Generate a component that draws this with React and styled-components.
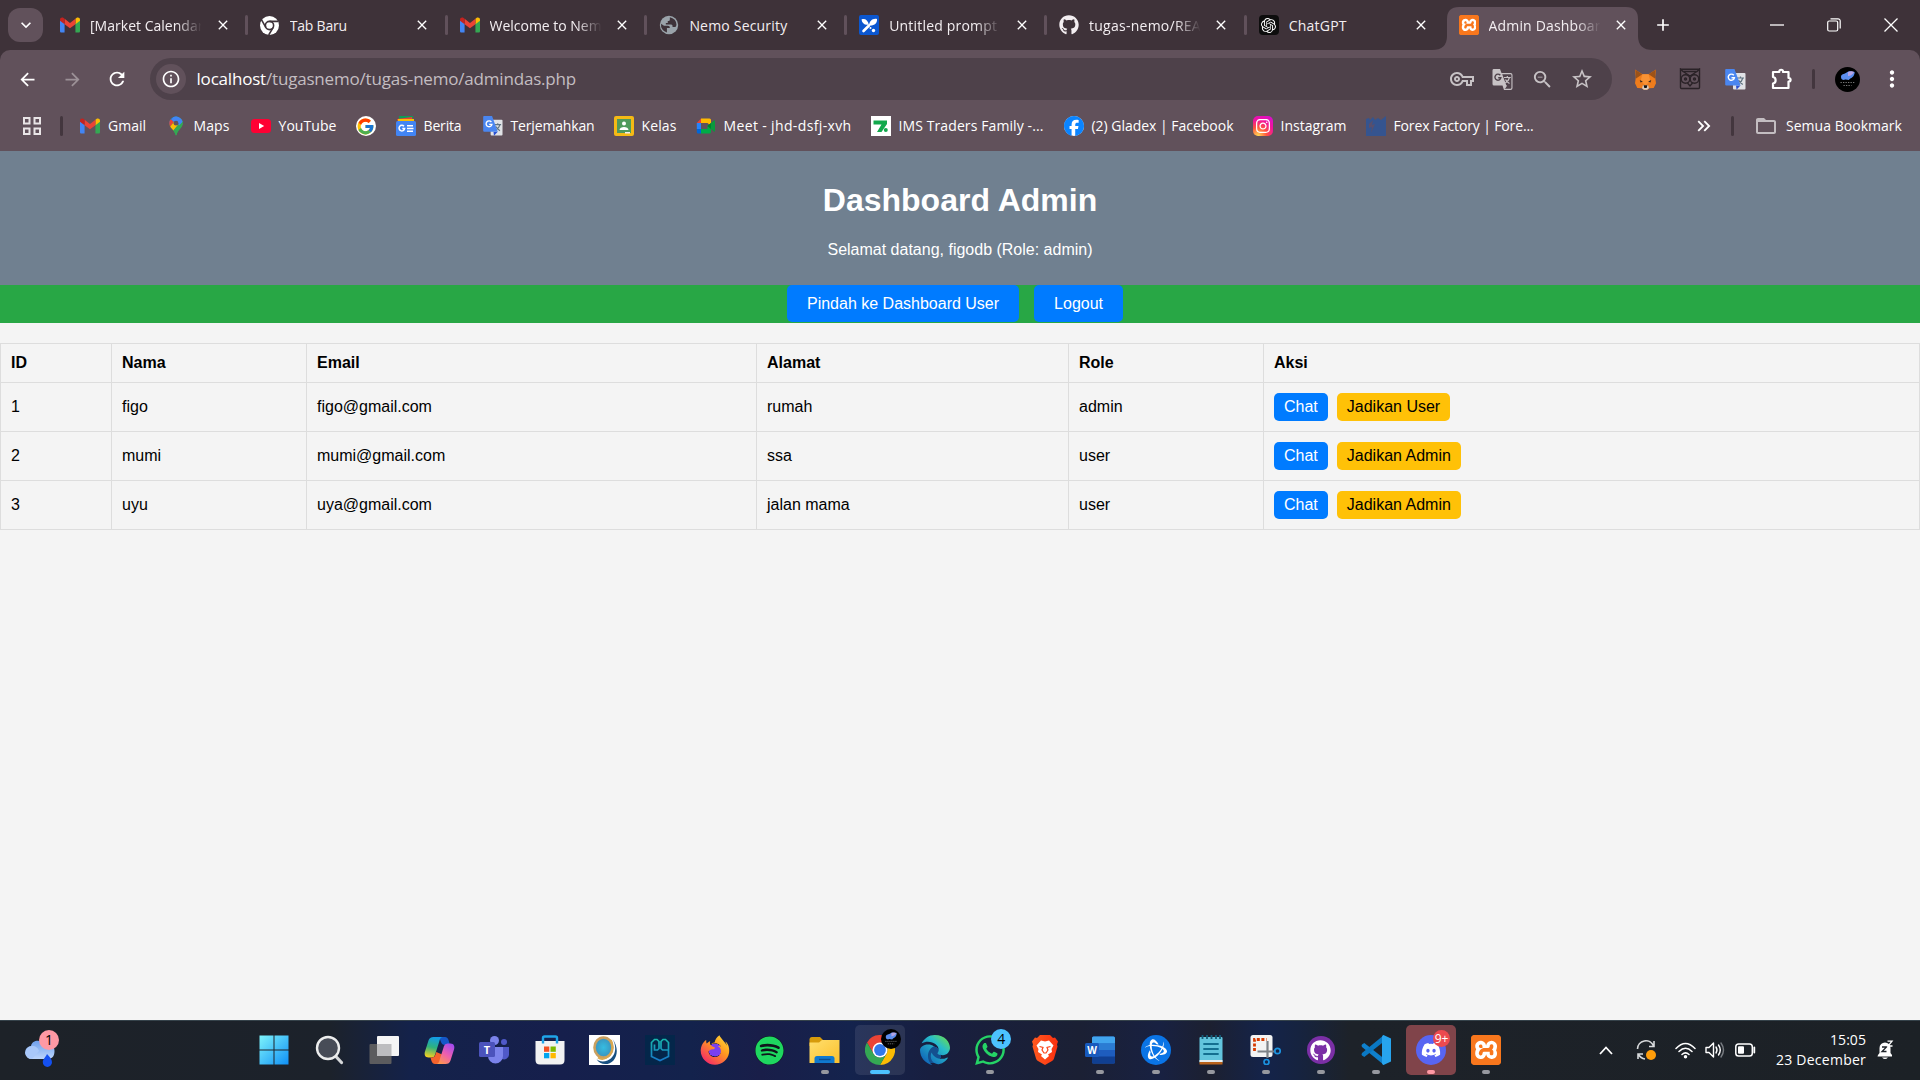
import React, { useLayoutEffect, useRef, useState } from "react";
import styled, { createGlobalStyle, css } from "styled-components";
import {
  MdArrowBack, MdArrowForward, MdRefresh, MdInfoOutline, MdOutlineVpnKey,
  MdZoomOut, MdStarBorder, MdMoreVert, MdClose, MdAdd,
  MdKeyboardArrowDown, MdKeyboardDoubleArrowRight, MdFolderOpen,
} from "react-icons/md";
import { FcGoogle } from "react-icons/fc";
import { FaGithub, FaDiscord, FaSpotify, FaWhatsapp, FaFirefoxBrowser, FaEdge, FaInstagram, FaFacebook } from "react-icons/fa6";
import { SiOpenai, SiXampp, SiBattledotnet } from "react-icons/si";

const uiFont = '"Open Sans", "Noto Sans", sans-serif';
const pageFont = '"Liberation Sans", Arial, sans-serif';

const GlobalStyle = createGlobalStyle`
  * { box-sizing: border-box; }
  html, body { margin: 0; padding: 0; overflow: hidden; }
  svg { display: block; flex: none; }
`;

const Screen = styled.div`
  width: 1920px;
  height: 1080px;
  display: flex;
  flex-direction: column;
  background: #f4f4f4;
  overflow: hidden;
  font-family: ${uiFont};
`;

/* ---------- fitted text ---------- */

const FitBox = styled.span`
  display: block;
  flex: none;
  white-space: pre;
  overflow: visible;
  line-height: 1.36;
`;

function Fit({ w, children }) {
  const ref = useRef(null);
  const [spacing, setSpacing] = useState(0);
  useLayoutEffect(() => {
    const range = document.createRange();
    range.selectNodeContents(ref.current);
    const natural = range.getBoundingClientRect().width;
    const count = ref.current.textContent.length;
    setSpacing((w - natural) / count);
  }, [w]);
  return <FitBox ref={ref} style={{ width: w, letterSpacing: `${spacing}px` }}>{children}</FitBox>;
}

/* ---------- browser chrome ---------- */

const TabStrip = styled.div`
  height: 50px;
  flex: none;
  display: flex;
  align-items: center;
  padding-left: 8px;
  background: #3e3239;
  color: #fff;
`;

const TabSearch = styled.div`
  width: 35px;
  height: 34px;
  margin-right: 3px;
  border-radius: 12px;
  background: #61515b;
  display: grid;
  place-items: center;
`;

const TabItem = styled.div`
  position: relative;
  width: 199.8px;
  height: 50px;
  padding-left: 14px;
  display: flex;
  align-items: center;
  font-size: 14px;
  color: #f3eef1;
  &::after {
    content: "";
    width: 3px;
    height: 20px;
    border-radius: 2px;
    margin-left: auto;
    margin-right: -2px;
    background: ${(p) => (p.$separator ? "#61515b" : "transparent")};
  }
`;

const ActiveShape = styled.svg`
  position: absolute;
  left: -13px;
  top: 0;
  z-index: 0;
`;

const TabIcon = styled.div`
  position: relative;
  width: 20px;
  height: 20px;
  margin-right: 10px;
  display: grid;
  place-items: center;
`;

const TabLabel = styled.div`
  position: relative;
  width: 114px;
  padding-top: 1px;
  overflow: hidden;
  ${(p) => p.$fade && css`mask-image: linear-gradient(90deg, #000 76%, transparent 98%);`}
`;

const TabClose = styled.div`
  position: relative;
  width: 18px;
  margin-left: 9.5px;
  display: grid;
  place-items: center;
  color: #fff;
`;

const NewTab = styled.div`
  width: 24px;
  margin-left: 7px;
  display: grid;
  place-items: center;
`;

const WindowButtons = styled.div`
  margin-left: auto;
  margin-right: 1px;
  height: 50px;
  display: flex;
  align-items: center;
`;

const WindowButton = styled.div`
  width: 57px;
  display: grid;
  place-items: center;
`;

const ToolbarBack = styled.div`
  flex: none;
  height: 101px;
  background: #3e3239;
`;

const Toolbar = styled.div`
  height: 101px;
  background: #61515b;
  border-radius: 10px 10px 0 0;
  display: flex;
  flex-direction: column;
`;

const AddressRow = styled.div`
  height: 58px;
  display: flex;
  align-items: center;
  color: #fff;
`;

const NavButton = styled.div`
  width: 44.9px;
  display: grid;
  place-items: center;
  color: ${(p) => (p.$dim ? "#9c9197" : "#fff")};
`;

const NavGroup = styled.div`
  width: 150px;
  padding-left: 5px;
  display: flex;
`;

const Omnibox = styled.div`
  width: 1462px;
  height: 42px;
  border-radius: 21px;
  background: #4e414a;
  display: flex;
  align-items: center;
  padding-left: 6px;
  font-size: 17px;
  color: #c3bdc1;
  b { font-weight: 400; color: #fff; }
`;

const InfoBubble = styled.div`
  width: 30px;
  height: 30px;
  border-radius: 50%;
  background: #61515b;
  color: #fff;
  display: grid;
  place-items: center;
  margin-right: 10.500px;
`;

const OmniIcons = styled.div`
  margin-left: auto;
  padding-right: 10px;
  display: flex;
  color: #c7c2c5;
`;

const OmniIcon = styled.div`
  width: 40px;
  height: 30px;
  display: grid;
  place-items: center;
`;

const Extensions = styled.div`
  flex: 1;
  display: flex;
  align-items: center;
  padding-left: 10.5px;
`;

const ExtSlot = styled.div`
  width: ${(p) => p.$w || 45}px;
  display: grid;
  place-items: center;
`;

const Separator = styled.div`
  width: 3px;
  height: 20px;
  border-radius: 2px;
  background: #43363e;
  flex: none;
`;

const BookmarkRow = styled.div`
  height: 36px;
  display: flex;
  align-items: center;
  color: #fff;
  font-size: 14px;
`;

const AppsGrid = styled.div`
  padding: 0 19px 0 23px;
`;

const Bookmark = styled.div`
  width: ${(p) => p.$w}px;
  flex: none;
  display: flex;
  align-items: center;
  gap: 8px;
`;

const BookmarkTail = styled.div`
  display: flex;
  align-items: center;
  margin-left: auto;
  padding-right: 18px;
`;

const FolderIcon = styled.div`
  color: #c3bdc1;
  margin: 0 8px 0 20px;
`;

/* ---------- page ---------- */

const Page = styled.main`
  flex: 1;
  font-family: ${pageFont};
  font-size: 16px;
  color: #000;
  background: #f4f4f4;
`;

const PageHeader = styled.header`
  height: 134px;
  padding-top: 31px;
  background: #708090;
  color: #fff;
  text-align: center;
  h1 { margin: 0 0 22px; font-size: 32px; line-height: 37px; }
  p { margin: 0; line-height: 18px; }
`;

const PageNav = styled.nav`
  height: 38px;
  padding-right: 10px;
  background: #28a745;
  display: flex;
  justify-content: center;
  gap: 15px;
`;

const NavLink = styled.a`
  height: 37px;
  padding: 10px 20px 9px;
  line-height: 18px;
  border-radius: 5px;
  background: #007bff;
  color: #fff;
`;

const Table = styled.table`
  width: 1920px;
  margin-top: 20px;
  table-layout: fixed;
  border-collapse: separate;
  border-spacing: 0;
  border-left: 1px solid #ddd;
  border-top: 1px solid #ddd;
  th, td {
    border: solid #ddd;
    border-width: 0 1px 1px 0;
    padding: 0 10px;
    text-align: left;
    line-height: 18px;
  }
  th { height: 39px; }
  td { height: 49px; }
`;

const Col = styled.col`
  width: ${(p) => p.$w}px;
`;

const Actions = styled.div`
  display: flex;
  gap: 9px;
`;

const ActionButton = styled.a`
  height: 28px;
  padding: 5px 10px;
  border-radius: 5px;
  background: ${(p) => (p.$warn ? "#ffc107" : "#007bff")};
  color: ${(p) => (p.$warn ? "#000" : "#fff")};
`;

/* ---------- taskbar ---------- */

const Taskbar = styled.footer`
  height: 60px;
  flex: none;
  display: flex;
  align-items: center;
  padding-bottom: 1px;
  border-top: 1px solid #35424a;
  background: linear-gradient(90deg,
    #1d2228 0, #1c222b 330px, #14224a 410px, #161f4c 560px, #13224c 690px, #191e49 760px,
    #14234d 850px, #181f40 930px, #1b2034 1080px, #182142 1160px, #1c2030 1210px, #14234a 1265px, #16233f 1300px,
    #1d2229 1350px, #1c2126 1920px);
  color: #fff;
`;

const Weather = styled.div`
  width: 246.5px;
  padding-left: 24px;
  position: relative;
`;

const Badge = styled.span`
  position: absolute;
  left: ${(p) => p.$x}px;
  top: ${(p) => p.$y}px;
  width: ${(p) => p.$size || 20}px;
  height: ${(p) => p.$size || 20}px;
  border-radius: 50%;
  background: ${(p) => p.$bg};
  color: ${(p) => p.$fg || "#000"};
  font-size: ${(p) => p.$font || 14}px;
  display: grid;
  place-items: center;
  line-height: 1;
`;

const AppButton = styled.div`
  position: relative;
  width: 50px;
  height: 50px;
  margin: 0 2.56px;
  border-radius: 5px;
  display: grid;
  place-items: center;
  background: ${(p) => p.$bg || "transparent"};
  &::after {
    content: "";
    position: absolute;
    bottom: 1px;
    left: 50%;
    transform: translateX(-50%);
    height: 4px;
    border-radius: 2px;
    width: ${(p) => p.$bar || 0}px;
    background: ${(p) => p.$barColor || "#96989f"};
  }
`;

const Tray = styled.div`
  margin-left: auto;
  display: flex;
  align-items: center;
`;

const TraySlot = styled.div`
  width: ${(p) => p.$w}px;
  display: grid;
  place-items: center;
`;

const Clock = styled.div`
  width: 100px;
  display: flex;
  flex-direction: column;
  align-items: flex-end;
  font-size: 14px;
  gap: 1px;
  padding-bottom: 1px;
`;

/* ---------- icons ---------- */

const Gmail = ({ size = 20 }) => (
  <svg width={size} height={size} viewBox="0 0 24 24">
    <path d="M0 6v13.5c0 .9.7 1.5 1.6 1.5H5.5V10z" fill="#4285f4" />
    <path d="M24 6v13.5c0 .9-.7 1.5-1.6 1.5h-3.9V10z" fill="#34a853" />
    <path d="M18.500 4.600V11L24 7V5.500c0-2.400-2.600-3.300-4.300-2z" fill="#fbbc04" />
    <path d="M5.500 11V4.600L12 9.500l6.500-4.900V11L12 16z" fill="#ea4335" />
    <path d="M0 5.500V7l5.500 4V4.600L4.300 3.500C2.600 2.200 0 3.100 0 5.500z" fill="#c5221f" />
  </svg>
);

const ChromeMono = () => (
  <svg width="19" height="19" viewBox="0 0 24 24">
    <circle cx="12" cy="12" r="12" fill="#fff" />
    <circle cx="12" cy="12" r="5.200" fill="none" stroke="#3e3239" strokeWidth="2" />
    <path d="M12 6.800H23M7.500 14.600L2 5M16.500 14.600L11 24" stroke="#3e3239" strokeWidth="2" />
  </svg>
);

const Globe = () => (
  <svg width="20" height="20" viewBox="0 0 24 24">
    <circle cx="12" cy="12" r="11" fill="#9aa3aa" />
    <path d="M2.500 10.500L6 13h4.500c2 0 2.500 1 2.500 2.500H9.500V21A9.200 9.200 0 0 1 2.500 10.500z" fill="#3e3239" />
    <path d="M13 2.600v3c0 1.300-1 1.700-2.500 1.700v2.200H8.200v2h6.300c1.300 0 1.800 1 1.800 2.800h3.500l1.200-2.200A9.300 9.300 0 0 0 13 2.600z" fill="#3e3239" />
  </svg>
);

const PromptIcon = () => (
  <svg width="20" height="20" viewBox="0 0 20 20">
    <rect width="20" height="20" rx="2" fill="#0b57d0" />
    <path d="M10 10.500L4.500 16" stroke="#fff" strokeWidth="2.600" strokeLinecap="round" />
    <path d="M2.500 4.500c3-1.500 6.500.5 7.300 5C6 10.500 3 8.500 2.500 4.500zM18 4c.5 4-2.500 7-8 6.500C10.500 6 13.500 3 18 4z" fill="#fff" />
    <circle cx="14.500" cy="15.500" r="1.700" fill="#fff" /><circle cx="11.500" cy="13" r="1" fill="#fff" />
  </svg>
);

const OpenAITile = styled.div`
  width: 20px;
  height: 20px;
  border-radius: 4px;
  background: #0d0d0d;
  color: #fff;
  display: grid;
  place-items: center;
`;

const XamppTile = styled.div`
  width: ${(p) => p.$size}px;
  height: ${(p) => p.$size}px;
  border-radius: ${(p) => p.$size / 8}px;
  background: linear-gradient(#fff, #fff) center / 76% 76% no-repeat, #f8771d;
  color: #f8771d;
  overflow: hidden;
`;

const Xampp = ({ size = 20 }) => (
  <XamppTile $size={size}><SiXampp size={size} /></XamppTile>
);

const WindowMinimise = () => (
  <svg width="14" height="14" viewBox="0 0 14 14"><path d="M0 7h14" stroke="#fff" strokeWidth="1.300" /></svg>
);
const WindowRestore = () => (
  <svg width="14" height="14" viewBox="0 0 14 14" fill="none" stroke="#fff" strokeWidth="1.200">
    <rect x=".7" y="3" width="10" height="10" rx="1.500" /><path d="M3.500 .8h7.500a2.200 2.200 0 0 1 2.200 2.200v7.500" />
  </svg>
);
const WindowClose = () => (
  <svg width="14" height="14" viewBox="0 0 14 14"><path d="M.5 .5l13 13M13.500 .5L.5 13.500" stroke="#fff" strokeWidth="1.300" /></svg>
);

const TranslateMono = () => (
  <svg width="21" height="21" viewBox="0 0 21 21">
    <path d="M1.500 0H8l1.500 4H18.500a2 2 0 0 1 2 2v13a2 2 0 0 1-2 2H12l-1.500-4.500H2a1.500 1.500 0 0 1-1.500-1.500V1.500A1.500 1.500 0 0 1 1.500 0z" fill="#c7c2c5" />
    <path d="M10.200 5.200h8.300a.9.900 0 0 1 .9.900v12.700a.9.900 0 0 1-.9.900h-6l2-3z" fill="#4e414a" />
    <path d="M12 8.500h6.800M15.300 7v1.500M17.500 8.500c-.6 2.500-2.500 4.500-4.200 5.500M13.500 10.500c.7 1.700 2.300 3 4 4M12.500 19.500l2-3" stroke="#c7c2c5" strokeWidth="1.200" fill="none" />
    <path d="M8.300 6.300a3 3 0 1 0 .6 2.400H6.200" stroke="#4e414a" strokeWidth="1.400" fill="none" />
  </svg>
);

const TranslateColor = ({ size = 21 }) => (
  <svg width={size} height={size} viewBox="0 0 21 21">
    <rect x="8" y="4" width="12.500" height="16.500" rx="1" fill="#e0e2e6" />
    <path d="M12 9h7M15.500 7.500V9M17.800 9c-.6 2.600-2.300 4.500-4.300 5.800M13.500 11c.8 1.800 2.300 3.200 4.300 4.500" stroke="#5f7380" strokeWidth="1.200" fill="none" />
    <path d="M11 16.500h4.500l-4 4.200z" fill="#2a4fd0" />
    <path d="M1 0h8.500l6 16.500H1.500A1.300 1.300 0 0 1 .2 15V1A1 1 0 0 1 1 0z" fill="#4a86f0" />
    <path d="M8.800 6.300a3.100 3.100 0 1 0 .6 2.500H6.500" stroke="#fff" strokeWidth="1.400" fill="none" />
  </svg>
);

const Fox = () => (
  <svg width="21" height="21" viewBox="0 0 20 20">
    <path d="M0 .5l7 4.500h6l7-4.500-.8 7 .8 6-2.200 4.500-4.300.3-2 1.700h-3l-2-1.700L2.200 18 0 13.500l.8-6z" fill="#ee7c1c" />
    <path d="M.3 .8L7 5 1 9zM19.700 .8L13 5l6 4z" fill="#9c5218" />
    <path d="M7 5L5.500 11l4.500 5 4.500-5L13 5z" fill="#f99234" />
    <path d="M4.500 10.500l3 1.500-2.200.8zM15.500 10.500l-3 1.500 2.200.8z" fill="#3a2a22" />
    <path d="M7.500 15.500h5l.8 2.800-1.800 1.500h-3l-1.800-1.500z" fill="#d8ccc2" /><path d="M8.200 15.500h3.600l-.7 2.500H8.900z" fill="#18130f" />
  </svg>
);

const Owl = () => (
  <svg width="22" height="22" viewBox="0 0 22 22" fill="none" stroke="#2a2227" strokeWidth="1.400">
    <path d="M1.500 1v18.500q0 1 1 1h17q1 0 1-1V1L18 3.500H4zM1.500 1.200h19M4 3.500L11 8l7-4.500" />
    <circle cx="6.500" cy="11" r="4.300" /><circle cx="15.500" cy="11" r="4.300" /><circle cx="6.500" cy="11" r="1" /><circle cx="15.500" cy="11" r="1" />
    <path d="M8.500 15l2.500 3 2.500-3" />
  </svg>
);

const PuzzleSlot = styled.div`
  padding-left: 3px;
`;

const Puzzle = () => (
  <svg width="22" height="22" viewBox="0 0 22 22" fill="none" stroke="#fff" strokeWidth="2.200" strokeLinejoin="round">
    <path d="M2 4h6.300c-.5-3 4.200-3 3.700 0H17.500v6c2.800 0 2.800 3.600 0 3.600V20H2v-4.500c3.500-.5 3.500-6 0-6.500z" />
  </svg>
);

const Avatar = ({ size = 25 }) => (
  <svg width={size} height={size} viewBox="0 0 25 25">
    <circle cx="12.500" cy="12.500" r="12.500" fill="#000" />
    <path d="M6 10c0-3 3-3 5-4 2-2 5-2 7-1 2-1 2 1 1 3-1 3-4 3-5 5-2 0-3-1-5 0-2 0-3-1-3-3z" fill="#5b8dee" />
    <path d="M13 5c2-1 5-1 6 0-1 2-3 4-6 4z" fill="#b6a4e4" />
    <path d="M5.500 15.500h14M8.500 18.500h8" stroke="#777" strokeWidth="1.200" strokeDasharray="1.300 1.200" />
  </svg>
);

const Apps = () => (
  <svg width="18" height="18" viewBox="0 0 18 18" fill="none" stroke="#e9e5e7" strokeWidth="2">
    <rect x="1" y="1" width="5.500" height="5.500" /><rect x="11.500" y="1" width="5.500" height="5.500" />
    <rect x="1" y="11.500" width="5.500" height="5.500" /><rect x="11.500" y="11.500" width="5.500" height="5.500" />
  </svg>
);

const MapsPin = () => (
  <svg width="20" height="20" viewBox="0 0 20 20">
    <defs><clipPath id="pin"><path d="M10 .5A6.700 6.700 0 0 0 3.300 7.200C3.300 12 8.500 13.500 9.300 18.700q.7 1.600 1.400 0C11.500 13.500 16.700 12 16.700 7.200A6.700 6.700 0 0 0 10 .5z" /></clipPath></defs>
    <g clipPath="url(#pin)">
      <rect width="20" height="20" fill="#34a853" />
      <path d="M0 0h12L3 9z" fill="#1a73e8" />
      <path d="M0 3.500h5.500L8 6 3 12z" fill="#ea4335" />
      <path d="M8 0h10v4l-6.500 2.500L8 6 5.500 3.500z" fill="#4285f4" />
      <path d="M3 12L8 6l4 3L7 15z" fill="#fbbc04" />
      <path d="M12 9l5-6 3 8-9 9-4-5z" fill="#34a853" />
      <path d="M11.500 6.500L16 1.500l2 3-5 5z" fill="#4285f4" />
    </g>
    <circle cx="10" cy="7.200" r="2.400" fill="#61515b" />
  </svg>
);

const YouTube = () => (
  <svg width="20" height="20" viewBox="0 0 20 20"><rect y="3" width="20" height="14" rx="3.500" fill="#ff0033" /><path d="M8 7l5.200 3L8 13z" fill="#fff" /></svg>
);

const GoogleTile = styled.div`
  width: 20px;
  height: 20px;
  border-radius: 50%;
  background: #fff;
  display: grid;
  place-items: center;
`;

const News = () => (
  <svg width="20" height="20" viewBox="0 0 20 20">
    <path d="M3 0h14v5H3z" fill="#0c9d58" /><path d="M1 3l15-2 1 5H2z" fill="#ea4335" /><path d="M2 3h16v4H2z" fill="#fbbc04" />
    <rect y="5" width="20" height="15" rx="1.500" fill="#4285f4" />
    <path d="M8 10.300a2.800 2.800 0 1 0 .6 2.300H6.300M11 9.700h6M11 12.500h6.500M11 15.200h6" stroke="#fff" strokeWidth="1.500" fill="none" />
  </svg>
);

const Classroom = () => (
  <svg width="20" height="20" viewBox="0 0 20 20">
    <rect width="20" height="20" rx="2" fill="#f5ba15" /><rect x="3" y="3" width="14" height="14" fill="#4f9a5c" />
    <circle cx="10" cy="7.500" r="2" fill="#fff" /><path d="M5.500 14c0-4 9-4 9 0z" fill="#fff" /><path d="M11 16h5v1.500h-5z" fill="#f1f1f1" />
  </svg>
);

const Meet = () => (
  <svg width="20" height="20" viewBox="0 0 20 20">
    <path d="M5 2.500L.8 7H5z" fill="#ea4335" /><path d="M.8 7H5v6H.8z" fill="#2684fc" /><path d="M.8 13H5v4.500H2.300A1.500 1.500 0 0 1 .8 16z" fill="#0066da" />
    <path d="M5 2.500h8.500A1.500 1.500 0 0 1 15 4v6l-3.500-3H5z" fill="#ffba00" /><path d="M5 13h6.500v-3L15 7.500V16a1.500 1.500 0 0 1-1.500 1.500H5z" fill="#00ac47" />
    <path d="M11.500 10L18 4.500q1-.6 1 .5v10q0 1-1 .4z" fill="#0a9a3e" /><path d="M15 7v6l-3.500-3z" fill="#00832d" />
  </svg>
);

const Traders = () => (
  <svg width="20" height="20" viewBox="0 0 20 20"><path d="M0 0h20v20H0z" fill="#fff" /><path d="M2.500 4.500h13.500v3.500L10.500 16H6l4.500-7.500h-8z" fill="#12a84c" /><circle cx="14.800" cy="14" r="2" fill="#12a84c" /></svg>
);

const FacebookTile = styled.div`
  width: 20px;
  height: 20px;
  border-radius: 50%;
  background: #fff;
  color: #0a84ff;
`;

const InstagramTile = styled.div`
  width: 20px;
  height: 20px;
  border-radius: 5px;
  color: #fff;
  display: grid;
  place-items: center;
  background: radial-gradient(circle at 25% 100%, #fd5 0, #ff543e 35%, #f0129f 65%, #d010d8 100%);
`;

const Forex = () => (
  <svg width="20" height="20" viewBox="0 0 20 20"><path d="M0 3l3-1 1 2 3-3 2 3 3-2 3 2 5-4v20H0z" fill="#35548f" /><path d="M3 8l4-4-1 5 3-1-4 9 1-6-3 1z" fill="#594f6c" /></svg>
);

const WeatherIcon = () => (
  <svg width="32" height="36" viewBox="0 0 32 36">
    <defs><linearGradient id="cloud" x1="0" y1="0" x2="0" y2="1"><stop offset="0" stopColor="#6fa0ec" /><stop offset="1" stopColor="#bcd5fb" /></linearGradient></defs>
    <path d="M8 27a6.500 6.500 0 0 1-1-13C8 8 17 7 19.500 12c6-3 11 1 11 7s-3 8-7 8z" fill="url(#cloud)" />
    <path d="M8 27a6.500 6.500 0 0 1 0-13c4 0 6 2 7 5" fill="#a9c8f9" />
    <path d="M20 22c3 3 5 5.500 5 8.300a4.600 4.600 0 0 1-9.200 0C15.800 27 19 25 20 22z" fill="#1450f0" transform="translate(3 0)" />
  </svg>
);

const StartIcon = () => (
  <svg width="30" height="30" viewBox="0 0 30 30">
    <defs><linearGradient id="win" x1="0" y1="0" x2="1" y2="1"><stop offset="0" stopColor="#7ef4fb" /><stop offset="1" stopColor="#0f8ff5" /></linearGradient></defs>
    <path d="M.5 .5h14v14h-14zM15.500 .5h14v14h-14zM.5 15.500h14v14h-14zM15.500 15.500h14v14h-14z" fill="url(#win)" />
  </svg>
);

const SearchIcon = () => (
  <svg width="30" height="30" viewBox="0 0 30 30"><path d="M21 20.500l6.500 7" stroke="#d6d8da" strokeWidth="3.200" strokeLinecap="round" /><circle cx="14" cy="13" r="11" fill="#474c57" stroke="#eceded" strokeWidth="2.400" /></svg>
);

const TaskView = () => (
  <svg width="30" height="30" viewBox="0 0 30 30"><rect x=".5" y="9" width="22" height="20" rx="1" fill="#5c5c5e" /><rect x="8" y="1" width="22" height="20" rx="1" fill="#f5f5f5" /><path d="M8 9h14.500v12H8z" fill="#bdbdbf" /></svg>
);

const Copilot = () => (
  <svg width="31" height="29" viewBox="0 0 31 29">
    <defs>
      <linearGradient id="cpA" x1=".5" y1="0" x2=".3" y2="1"><stop offset="0" stopColor="#139ce8" /><stop offset=".5" stopColor="#2fb37c" /><stop offset="1" stopColor="#f5d020" /></linearGradient>
      <linearGradient id="cpB" x1=".8" y1="0" x2=".2" y2="1"><stop offset="0" stopColor="#a24bf0" /><stop offset=".5" stopColor="#ee5fae" /><stop offset="1" stopColor="#ff9a4a" /></linearGradient>
    </defs>
    <path d="M15 1h6q2.500 0 3.500 3l1.500 5h-5q-3 0-4-3z" fill="#1557c8" />
    <path d="M9.500 1H19c-2 0-3 1.500-3.600 4L11 19q-.8 2.500-3.500 2.500h-3C1 21.500 0 18.500 1 15.500L4.500 4.500Q5.500 1 9.500 1z" fill="url(#cpA)" />
    <path d="M16 28h-5q-2.500 0-3.500-3l-1-3.500h1.500q2.500 0 3.300-2.500l1-3 7 3z" fill="#f4632c" />
    <path d="M21.500 28H12c2 0 3-1.500 3.600-4L20 10q.8-2.500 3.500-2.500h3c3.500 0 4.500 3 3.500 6L26.500 24.500Q25.500 28 21.500 28z" fill="url(#cpB)" />
  </svg>
);

const Teams = () => (
  <svg width="30" height="30" viewBox="0 0 30 30">
    <circle cx="25" cy="7" r="3" fill="#5059c9" /><path d="M20 12h10v8a5 5 0 0 1-7 4z" fill="#5059c9" />
    <circle cx="15.500" cy="5.500" r="4.500" fill="#7b83eb" /><path d="M9 12h15v9a7.500 7.500 0 0 1-15 0z" fill="#7b83eb" />
    <rect y="7" width="16" height="15" rx="1.500" fill="#4b53bc" />
    <text x="8" y="18.500" fontFamily="Open Sans, sans-serif" fontWeight="700" fontSize="11" fill="#fff" textAnchor="middle">T</text>
  </svg>
);

const Store = () => (
  <svg width="30" height="30" viewBox="0 0 30 30">
    <path d="M8 8V3q0-1.500 1.500-1.500h11Q22 1.500 22 3v5" stroke="#1fa5e8" strokeWidth="2.400" fill="none" />
    <path d="M.5 6h29v19q0 4.500-4.500 4.500H5Q.5 29.500 .5 25z" fill="#f2f2f2" />
    <path d="M8 5.500v3M22 5.500v3" stroke="#1fa5e8" strokeWidth="2.400" />
    <path d="M9 11.500h5.300v5.300H9z" fill="#f25022" /><path d="M15.500 11.500h5.300v5.300h-5.300z" fill="#7fba00" /><path d="M9 18h5.300v5.300H9z" fill="#00a4ef" /><path d="M15.500 18h5.300v5.300h-5.300z" fill="#ffb900" />
  </svg>
);

const GIcon = () => (
  <svg width="31" height="30" viewBox="0 0 31 30">
    <defs><radialGradient id="gball"><stop offset="0" stopColor="#35bde2" /><stop offset="1" stopColor="#3b93bd" /></radialGradient></defs>
    <path d="M0 0h31v30H0z" fill="#fff" />
    <path d="M23.500 4c5 8 3 18-5 21.500-5 2-9 .5-11-1.500 3 6 12 7 17 1.500 5-6 4-15-1-21.500z" fill="#174f80" />
    <ellipse cx="14.500" cy="12.500" rx="9" ry="10" fill="url(#gball)" stroke="#c9a060" strokeWidth="2.600" />
    <path d="M22 5c3 8 1 15-5 18-3 1.500-6 1-8-.5" stroke="#dba94e" strokeWidth="1.800" fill="none" />
  </svg>
);

const PG = () => (
  <svg width="30" height="30" viewBox="0 0 30 30">
    <defs><linearGradient id="pg" x1="0" y1="0" x2="0" y2="1"><stop offset="0" stopColor="#18b6ae" /><stop offset="1" stopColor="#1778c8" /></linearGradient></defs>
    <path d="M0 0h30v30H0z" fill="#04264a" />
    <path d="M6.500 14.500V7.500l3-3h2.500l2 2v7l-1.500 1.500H9.500V9.500M23.500 18V7.500l-3-3h-2.500l-2 2v7l1.500 1.500h6M6.500 14v7.500l8.500 4 8.500-4V14" stroke="url(#pg)" strokeWidth="1.700" fill="none" />
  </svg>
);

const HiddenDefs = styled.svg`
  position: absolute;
`;

const FirefoxCore = styled.div`
  border-radius: 50%;
  background: radial-gradient(circle at 50% 50%, #7b3ff0 0 30%, transparent 31%);
`;

const Firefox = () => (
  <>
    <HiddenDefs width="0" height="0"><defs>
      <linearGradient id="ff" x1="1" y1="0" x2=".2" y2="1"><stop offset="0" stopColor="#ffe63e" /><stop offset=".45" stopColor="#ff9a1f" /><stop offset="1" stopColor="#f5246b" /></linearGradient>
      <linearGradient id="edge" x1="1" y1=".1" x2=".2" y2="1"><stop offset="0" stopColor="#6be04a" /><stop offset=".35" stopColor="#28bccb" /><stop offset="1" stopColor="#0f62b8" /></linearGradient>
    </defs></HiddenDefs>
    <FirefoxCore><FaFirefoxBrowser size={30} fill="url(#ff)" /></FirefoxCore>
  </>
);

const EdgeCore = styled.div`
  border-radius: 50%;
  background: radial-gradient(circle at 42% 66%, #14508f 0 32%, transparent 33%);
`;

const SpotifyDisc = styled.div`
  width: 29px;
  height: 29px;
  border-radius: 50%;
  background: #10151c;
  color: #1ed760;
`;

const Explorer = () => (
  <svg width="31" height="30" viewBox="0 0 31 30">
    <defs><linearGradient id="fold" x1="0" y1="0" x2="1" y2="1"><stop offset="0" stopColor="#ffdf6e" /><stop offset="1" stopColor="#fcc02c" /></linearGradient></defs>
    <path d="M.5 4.500Q.5 2 3 2h8l3 3v6H.5z" fill="#d79b0b" /><path d="M.5 7.500h9.500L13 5h17.500v23H.5z" fill="url(#fold)" />
    <path d="M5.500 28v-4.500Q5.500 21 8 21h15q2.500 0 2.500 2.500V28z" fill="#1079cf" /><path d="M10 24.500h11.500" stroke="#0b4f92" strokeWidth="1.400" />
  </svg>
);

const Chrome = () => (
  <svg width="30" height="30" viewBox="0 0 30 30">
    <path d="M2 7.500A15 15 0 0 1 28 7.500H15L8.500 18.700z" fill="#ea4335" />
    <path d="M28 7.500A15 15 0 0 1 15 30l6.500-11.300A7.500 7.500 0 0 0 15 7.500z" fill="#fbbc04" />
    <path d="M15 30A15 15 0 0 1 2 7.500l6.500 11.200a7.500 7.500 0 0 0 13 0z" fill="#34a853" />
    <circle cx="15" cy="15" r="7.500" fill="#fff" /><circle cx="15" cy="15" r="5.900" fill="#3278ea" />
  </svg>
);

const ChromeAvatar = styled.div`
  position: absolute;
  left: 26px;
  top: 4px;
`;

const Word = () => (
  <svg width="30" height="30" viewBox="0 0 30 30">
    <rect x="7" y="1.500" width="23" height="27" rx="1.500" fill="#1e5dbe" /><path d="M7 3q0-1.500 1.500-1.500h20Q30 1.500 30 3v5.500H7z" fill="#41a5ee" /><path d="M7 8.500h23V15H7z" fill="#2b7cd3" /><path d="M7 21.500h23V27q0 1.500-1.500 1.500h-20Q7 28.500 7 27z" fill="#103f91" />
    <rect x="0" y="8" width="14" height="14" rx="1.500" fill="#185abd" />
    <text x="7" y="18.700" fontFamily="Open Sans, sans-serif" fontWeight="700" fontSize="10" fill="#fff" textAnchor="middle">W</text>
  </svg>
);

const BlueDisc = styled.div`
  width: 30px;
  height: 30px;
  border-radius: 50%;
  background: #0a74e6;
  color: #fff;
  display: grid;
  place-items: center;
`;

const Notepad = () => (
  <svg width="24" height="30" viewBox="0 0 24 30">
    <rect x=".5" y="2" width="23" height="26" rx="1" fill="#62c5dd" /><path d="M.5 25h23v2H.500z" fill="#e8eef0" /><path d="M.5 27h23v2.500H.5z" fill="#b8621b" />
    <path d="M3.500 0v4M8 0v4M12.500 0v4M17 0v4M21 0v4" stroke="#155d78" strokeWidth="1.800" /><path d="M5 9h14M5 14h14M5 19h14" stroke="#136f90" strokeWidth="1.800" strokeLinecap="round" />
  </svg>
);

const Snip = () => (
  <svg width="31" height="30" viewBox="0 0 31 30">
    <rect x=".5" y="0" width="22" height="22" rx="2.500" fill="#f3f3f3" />
    <path d="M4.500 16V4.500h12" stroke="#d83b01" strokeWidth="2.800" strokeDasharray="3 1.600" fill="none" />
    <path d="M17.500 6v17M7.500 16.500h18" stroke="#7d8287" strokeWidth="2.200" /><circle cx="27.500" cy="16" r="2.700" fill="none" stroke="#1b93e0" strokeWidth="1.700" /><circle cx="16.500" cy="27" r="2.500" fill="none" stroke="#1b93e0" strokeWidth="1.700" />
  </svg>
);

const GithubDisc = styled.div`
  width: 28px;
  height: 28px;
  border-radius: 50%;
  background: #7b2fa6;
  color: #fff;
  display: grid;
  place-items: center;
`;

const VSCode = () => (
  <svg width="30" height="30" viewBox="0 0 30 30">
    <path d="M1 9.500L3.300 8 23 23.500V30L1 12q-1-1.500 0-2.500z" fill="#0f80cc" /><path d="M1 20.500L3.300 22 23 6.500V0L1 18q-1 1.500 0 2.500z" fill="#0a78c4" />
    <path d="M22.500 0L30 3.500v23L22.500 30q-1.500-.3-1.500-2V2q0-1.700 1.500-2z" fill="#27a4ee" />
  </svg>
);

const DiscordDisc = styled.div`
  width: 30px;
  height: 30px;
  border-radius: 50%;
  background: #5865f2;
  color: #fff;
  display: grid;
  place-items: center;
`;

const Brave = () => (
  <svg width="26" height="30" viewBox="0 0 26 30">
    <defs><linearGradient id="brave"><stop offset="0" stopColor="#ff5a1f" /><stop offset="1" stopColor="#fb3010" /></linearGradient></defs>
    <path d="M8 0h10l3 3 2-.5 3 4-1 3 .5 2-3.500 12q-.5 1.500-2 2.500L13 30l-7-4q-1.500-1-2-2.500L.5 11.500l.5-2-1-3 3-4L5 3z" fill="url(#brave)" />
    <path d="M13 6.500l4-1 4.500 5-2 3.500.5 3-4 2.500 1 1.500-4 3.500-4-3.500 1-1.500L6 17l.5-3-2-3.500L9 5.500z" fill="#fff" />
    <path d="M7.500 11.500l3.500 1-1 2.500 2 3h2l2-3-1-2.500 3.500-1" stroke="#fb4418" strokeWidth="1.200" fill="none" />
  </svg>
);

const ChevronUp = () => (<svg width="14" height="9" viewBox="0 0 14 9"><path d="M1 8l6-6.500L13 8" fill="none" stroke="#fff" strokeWidth="1.800" /></svg>);

const Update = () => (
  <svg width="20" height="22" viewBox="0 0 20 22">
    <path d="M1.500 10a8.300 8.300 0 0 1 16-3M18 2v5.500h-5M2 20v-5h5M2 15c2 3 4 4.500 7 5" fill="none" stroke="#d8dadc" strokeWidth="1.600" />
    <circle cx="15" cy="16" r="5" fill="#ff9d0a" />
  </svg>
);

const Wifi = () => (
  <svg width="21" height="17" viewBox="0 0 21 17" fill="none" stroke="#fff" strokeWidth="1.500" strokeLinecap="round">
    <path d="M1 6.500q9.500-10 19 0M4 9.500q6.500-6.500 13 0M7 12.500q3.500-3.300 7 0" /><circle cx="10.500" cy="14.800" r="1" fill="#fff" />
  </svg>
);

const Volume = () => (
  <svg width="20" height="18" viewBox="0 0 20 18" fill="none" stroke="#fff" strokeWidth="1.400" strokeLinecap="round" strokeLinejoin="round">
    <path d="M1 6.500h3L8.500 2v14L4 11.500H1z" /><path d="M11 6q2 3 0 6M13.500 4q3.500 5 0 10" /><path d="M16 2q5 7 0 14" stroke="#777b80" />
  </svg>
);

const Battery = () => (
  <svg width="21" height="14" viewBox="0 0 21 14"><rect x=".8" y="1" width="16.500" height="12" rx="2.800" fill="none" stroke="#fff" strokeWidth="1.500" /><rect x="3" y="3.300" width="6" height="7.400" rx="1" fill="#fff" /><path d="M19.300 4.500v5" stroke="#fff" strokeWidth="1.800" strokeLinecap="round" /></svg>
);

const Bell = () => (
  <svg width="18" height="20" viewBox="0 0 18 20">
    <path d="M2 15l1.500-2V8a5.500 5.500 0 0 1 11 0v5l1.500 2v1.500H1.500z" fill="#fff" /><path d="M6 17.500h6q-3 3-6 0z" fill="#fff" />
    <path d="M6 7h4.500L6 11.500h4.500" stroke="#1d2228" strokeWidth="1.300" fill="none" /><path d="M11.500 1.200H16L12 6h4.500" stroke="#fff" strokeWidth="1.300" fill="none" />
  </svg>
);

/* ---------- data ---------- */

const tabs = [
  { label: "[Market Calendar", w: 113.5, fade: true, icon: <Gmail /> },
  { label: "Tab Baru", w: 57, icon: <ChromeMono /> },
  { label: "Welcome to Nem", w: 112, fade: true, icon: <Gmail /> },
  { label: "Nemo Security", w: 98, icon: <Globe /> },
  { label: "Untitled prompt", w: 108, fade: true, icon: <PromptIcon /> },
  { label: "tugas-nemo/REA", w: 112, fade: true, icon: <FaGithub size={20} /> },
  { label: "ChatGPT", w: 58, icon: <OpenAITile><SiOpenai size={15} /></OpenAITile> },
];

const bookmarks = [
  { label: "Gmail", w: 38, pitch: 85.5, icon: <Gmail /> },
  { label: "Maps", w: 36, pitch: 85, icon: <MapsPin /> },
  { label: "YouTube", w: 58, pitch: 105, icon: <YouTube /> },
  { label: "", w: 0, pitch: 40, icon: <GoogleTile><FcGoogle size={19} /></GoogleTile> },
  { label: "Berita", w: 38, pitch: 87, icon: <News /> },
  { label: "Terjemahkan", w: 84, pitch: 131, icon: <TranslateColor size={20} /> },
  { label: "Kelas", w: 35, pitch: 82, icon: <Classroom /> },
  { label: "Meet - jhd-dsfj-xvh", w: 128, pitch: 175, icon: <Meet /> },
  { label: "IMS Traders Family -...", w: 145, pitch: 193, icon: <Traders /> },
  { label: "(2) Gladex | Facebook", w: 142, pitch: 189, icon: <FacebookTile><FaFacebook size={20} /></FacebookTile> },
  { label: "Instagram", w: 66, pitch: 113, icon: <InstagramTile><FaInstagram size={16} /></InstagramTile> },
  { label: "Forex Factory | Fore...", w: 140, pitch: 190, icon: <Forex /> },
];

const users = [
  { id: "1", nama: "figo", email: "figo@gmail.com", alamat: "rumah", role: "admin", action: "Jadikan User" },
  { id: "2", nama: "mumi", email: "mumi@gmail.com", alamat: "ssa", role: "user", action: "Jadikan Admin" },
  { id: "3", nama: "uyu", email: "uya@gmail.com", alamat: "jalan mama", role: "user", action: "Jadikan Admin" },
];

const apps = [
  { icon: <StartIcon /> }, { icon: <SearchIcon /> }, { icon: <TaskView /> }, { icon: <Copilot /> },
  { icon: <Teams /> }, { icon: <Store /> }, { icon: <GIcon /> }, { icon: <PG /> }, { icon: <Firefox /> },
  { icon: <SpotifyDisc><FaSpotify size={29} /></SpotifyDisc> },
  { icon: <Explorer />, bar: 8 },
  { icon: <><Chrome /><ChromeAvatar><Avatar size={20} /></ChromeAvatar></>, bar: 20, barColor: "#4cc2ff", bg: "rgba(255,255,255,.09)" },
  { icon: <EdgeCore><FaEdge size={30} fill="url(#edge)" /></EdgeCore> },
  { icon: <><FaWhatsapp size={34} color="#25d366" /><Badge $x={26} $y={4} $bg="#4cc2ff">4</Badge></>, bar: 8 },
  { icon: <Brave /> },
  { icon: <Word />, bar: 8 },
  { icon: <BlueDisc><SiBattledotnet size={22} /></BlueDisc>, bar: 8 },
  { icon: <Notepad />, bar: 8 },
  { icon: <Snip />, bar: 8 },
  { icon: <GithubDisc><FaGithub size={21} /></GithubDisc>, bar: 8 },
  { icon: <VSCode />, bar: 8 },
  { icon: <><DiscordDisc><FaDiscord size={20} /></DiscordDisc><Badge $x={27} $y={5} $size={17} $font={12} $bg="#ec4a4f" $fg="#fff">9+</Badge></>, bar: 8, barColor: "#ff99a4", bg: "#80444a" },
  { icon: <Xampp size={30} />, bar: 8 },
];

export default function App() {
  return (
    <Screen>
      <GlobalStyle />
      <TabStrip>
        <TabSearch><MdKeyboardArrowDown size={20} /></TabSearch>
        {tabs.map((t, i) => (
          <TabItem key={t.label} $separator={i < 6}>
            <TabIcon>{t.icon}</TabIcon>
            <TabLabel $fade={t.fade}><Fit w={t.w}>{t.label}</Fit></TabLabel>
            <TabClose><MdClose size={16} /></TabClose>
          </TabItem>
        ))}
        <TabItem>
          <ActiveShape width="222" height="50" viewBox="0 0 222 50">
            <path d="M0 50q15 0 15-14V19Q15 7 27 7H194Q206 7 206 19V36q0 14 15 14z" fill="#61515b" />
          </ActiveShape>
          <TabIcon><Xampp /></TabIcon>
          <TabLabel $fade><Fit w={112}>Admin Dashboar</Fit></TabLabel>
          <TabClose><MdClose size={16} /></TabClose>
        </TabItem>
        <NewTab><MdAdd size={20} /></NewTab>
        <WindowButtons>
          <WindowButton><WindowMinimise /></WindowButton>
          <WindowButton><WindowRestore /></WindowButton>
          <WindowButton><WindowClose /></WindowButton>
        </WindowButtons>
      </TabStrip>

      <ToolbarBack>
        <Toolbar>
          <AddressRow>
            <NavGroup>
              <NavButton><MdArrowBack size={21} /></NavButton>
              <NavButton $dim><MdArrowForward size={21} /></NavButton>
              <NavButton><MdRefresh size={22} /></NavButton>
            </NavGroup>
            <Omnibox>
              <InfoBubble><MdInfoOutline size={20} /></InfoBubble>
              <Fit w={379.5}><b>localhost</b>/tugasnemo/tugas-nemo/admindas.php</Fit>
              <OmniIcons>
                <OmniIcon><MdOutlineVpnKey size={24} /></OmniIcon>
                <OmniIcon><TranslateMono /></OmniIcon>
                <OmniIcon><MdZoomOut size={23} /></OmniIcon>
                <OmniIcon><MdStarBorder size={24} /></OmniIcon>
              </OmniIcons>
            </Omnibox>
            <Extensions>
              <ExtSlot><Fox /></ExtSlot>
              <ExtSlot><Owl /></ExtSlot>
              <ExtSlot><TranslateColor /></ExtSlot>
              <ExtSlot><PuzzleSlot><Puzzle /></PuzzleSlot></ExtSlot>
              <ExtSlot $w={22}><Separator /></ExtSlot>
              <ExtSlot $w={46}><Avatar /></ExtSlot>
              <ExtSlot $w={43}><MdMoreVert size={26} /></ExtSlot>
            </Extensions>
          </AddressRow>
          <BookmarkRow>
            <AppsGrid><Apps /></AppsGrid>
            <Separator />
            <Bookmark $w={17} />
            {bookmarks.map((b) => (
              <Bookmark key={b.pitch + b.label} $w={b.pitch}>
                {b.icon}
                {b.label && <Fit w={b.w}>{b.label}</Fit>}
              </Bookmark>
            ))}
            <BookmarkTail>
              <TraySlot $w={54}><MdKeyboardDoubleArrowRight size={22} /></TraySlot>
              <Separator />
              <FolderIcon><MdFolderOpen size={24} /></FolderIcon>
              <Fit w={116}>Semua Bookmark</Fit>
            </BookmarkTail>
          </BookmarkRow>
        </Toolbar>
      </ToolbarBack>

      <Page>
        <PageHeader>
          <h1>Dashboard Admin</h1>
          <p>Selamat datang, figodb (Role: admin)</p>
        </PageHeader>
        <PageNav>
          <NavLink>Pindah ke Dashboard User</NavLink>
          <NavLink>Logout</NavLink>
        </PageNav>
        <Table>
          <colgroup>
            <Col $w={111} /><Col $w={195} /><Col $w={450} /><Col $w={312} /><Col $w={195} /><Col $w={656} />
          </colgroup>
          <thead>
            <tr><th>ID</th><th>Nama</th><th>Email</th><th>Alamat</th><th>Role</th><th>Aksi</th></tr>
          </thead>
          <tbody>
            {users.map((u) => (
              <tr key={u.id}>
                <td>{u.id}</td><td>{u.nama}</td><td>{u.email}</td><td>{u.alamat}</td><td>{u.role}</td>
                <td><Actions><ActionButton>Chat</ActionButton><ActionButton $warn>{u.action}</ActionButton></Actions></td>
              </tr>
            ))}
          </tbody>
        </Table>
      </Page>

      <Taskbar>
        <Weather><WeatherIcon /><Badge $x={39} $y={-2} $bg="#ff99a4">1</Badge></Weather>
        {apps.map((a, i) => (
          <AppButton key={i} $bar={a.bar} $barColor={a.barColor} $bg={a.bg}>{a.icon}</AppButton>
        ))}
        <Tray>
          <TraySlot $w={40}><ChevronUp /></TraySlot>
          <TraySlot $w={40}><Update /></TraySlot>
          <TraySlot $w={39}><Wifi /></TraySlot>
          <TraySlot $w={20}><Volume /></TraySlot>
          <TraySlot $w={41}><Battery /></TraySlot>
          <Clock><Fit w={36}>15:05</Fit><Fit w={90}>23 December</Fit></Clock>
          <TraySlot $w={38}><Bell /></TraySlot>
          <TraySlot $w={16} />
        </Tray>
      </Taskbar>
    </Screen>
  );
}
